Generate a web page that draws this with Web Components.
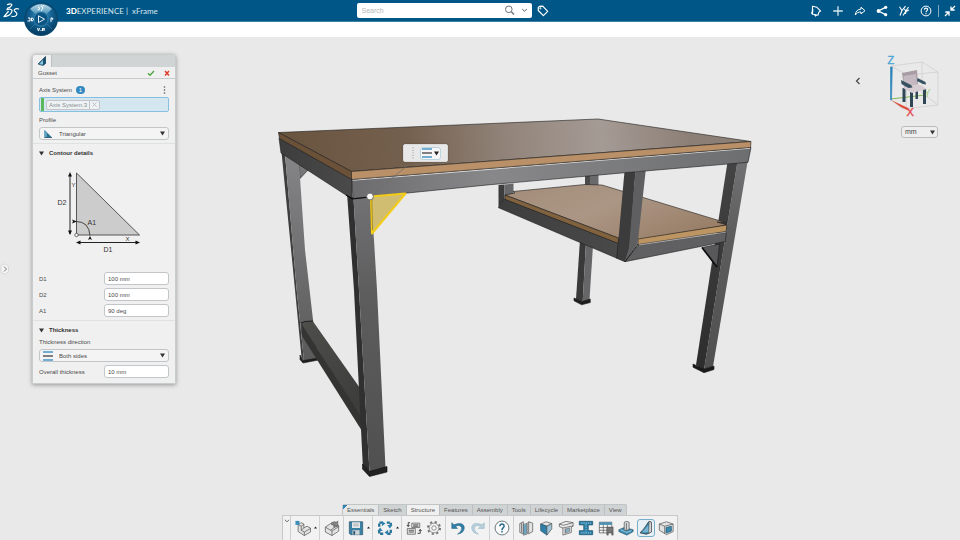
<!DOCTYPE html>
<html lang="en">
<head>
<meta charset="utf-8">
<meta name="viewport" content="width=device-width, initial-scale=1">
<title>3DEXPERIENCE | xFrame</title>
<style>
  html, body { height: 100%; margin: 0; }
  body {
    display: flex; flex-direction: column;
    font: 6px/8px "Liberation Sans", Arial, sans-serif;
    color: #4a4a4a; background: #e9e9e9; overflow: hidden;
    --blue: #005686; --steel: #2f7fa8; --line: #c3c6c8;
  }
</style>
</head>
<body>
<platform-bar></platform-bar>
<work-area>
  <model-scene slot="scene"></model-scene>
  <command-panel slot="panel" heading="Gusset">
    <pick-box label="Axis System" count="1" item="Axis System.3"></pick-box>
    <choice-box label="Profile" value="Triangular">
      <svg slot="icon" width="10" height="10" viewBox="0 0 10 10"><path d="M1.500 1l7.500 7.500H1.500z" fill="#2d6f93"/><path d="M1.500 1l2.500 2.600V8.500H1.500z" fill="#5fa3c4"/><path d="M1.500 8.500H9" stroke="#23516b" stroke-width=".8"/></svg>
    </choice-box>
    <panel-section heading="Contour details">
      <contour-diagram></contour-diagram>
      <field-row label="D1" value="100 mm"></field-row>
      <field-row label="D2" value="100 mm"></field-row>
      <field-row label="A1" value="90 deg"></field-row>
    </panel-section>
    <panel-section heading="Thickness">
      <choice-box label="Thickness direction" value="Both sides">
        <svg slot="icon" width="10" height="10" viewBox="0 0 10 10"><path d="M0 1h10M0 9h10" stroke="#4597c4" stroke-width="1.300"/><path d="M0 5h10" stroke="#333" stroke-width="1.200"/></svg>
      </choice-box>
      <field-row label="Overall thickness" value="10 mm"></field-row>
    </panel-section>
  </command-panel>
  <view-navigator slot="view"></view-navigator>
  <action-bar slot="actions"></action-bar>
</work-area>

<script>
const define = (name, render) => customElements.define(name, class extends HTMLElement {
  connectedCallback() {
    if (this.shadowRoot) return;
    const t = document.createElement('template');
    t.innerHTML = render(this);
    this.attachShadow({ mode: 'open' }).append(t.content.cloneNode(true));
  }
});
const at = (el, n) => el.getAttribute(n) || '';
const BUTTON = `button{all:unset;box-sizing:border-box;cursor:pointer;display:flex;align-items:center;justify-content:center}svg{display:block}`;

/* ---------- Platform bar ---------- */
define('platform-bar', () => `
<style>
  :host{display:grid;grid-template-columns:13fr 192px 15fr;align-items:center;height:22px;flex:none;
    background:var(--blue);color:#fff;border-bottom:1px solid #3f80a5;box-sizing:border-box;position:relative;z-index:2}
  ${BUTTON}
  .brand{display:flex;align-items:center;gap:4px;padding-left:3px}
  .compass{width:34px;height:20px;position:relative}
  .compass svg{position:absolute;left:0;top:0}
  h1{margin:0 0 0 4px;font:400 8px/12px Lato,sans-serif;color:#d7e6ef;white-space:pre}
  h1 b{color:#fff;font-weight:900}
  .find{display:flex;align-items:center;gap:5px}
  form{display:flex;align-items:center;flex:1;height:15px;background:#fff;border-radius:2px;margin:0}
  input{flex:1;min-width:0;border:0;outline:0;background:none;padding:0 0 0 5px;font:7px/9px "Liberation Sans",sans-serif;color:#444}
  input::placeholder{color:#b4b8bb;opacity:1}
  form button{width:15px;height:15px}
  .tools{display:flex;justify-content:flex-end;align-items:center;gap:10px;padding-right:4px}
  .tools .min{border-left:1px solid #7fabc3;padding-left:5px;margin-left:-4px;}
</style>
<div class="brand">
  <svg width="17" height="17" viewBox="0 0 17 17" fill="none" stroke="#fff" stroke-width="1.200" stroke-linecap="round" stroke-linejoin="round"><path d="M4.500 2.600C7 1.500 9.600 1.800 8.600 3.500 7.800 4.900 6.300 5.900 4.300 6.400"/><path d="M3.800 7.700C7.200 6.600 9.800 7.400 8.800 9.800 7.700 12.500 4.300 14.500 1 14.600L5.300 9.500"/><path d="M15.600 7C12.500 6 10 7.700 11.800 9.300 13.600 10.700 14.700 11.800 13.300 13.300 12.200 14.500 10.300 14.700 8.800 14.200"/></svg>
  <button class="compass" aria-label="Compass"><svg width="34" height="37" viewBox="0 0 34 37">
    <defs><radialGradient id="cg" cx=".5" cy=".35" r=".65"><stop offset="0" stop-color="#4b9ac4"/><stop offset=".55" stop-color="#126091"/><stop offset="1" stop-color="#053c62"/></radialGradient>
    <linearGradient id="ct" x2="0" y2="1"><stop offset="0" stop-color="#bcd8e6"/><stop offset="1" stop-color="#4e94bb"/></linearGradient></defs>
    <circle cx="17" cy="18" r="17" fill="#0a4870"/><circle cx="17" cy="18" r="15.500" fill="url(#cg)"/>
    <path d="M6 8a15 15 0 0 1 22 0l-5.500 5a8 8 0 0 0-11 0z" fill="url(#ct)"/>
    <path d="M6 28l5-5a9 9 0 0 0 12 0l5 5M6 8l5 5M28 8l-5 5" stroke="#2f7aa5" fill="none" stroke-width=".7"/>
    <circle cx="17" cy="18" r="7" fill="#0b5585" stroke="#3d88b2" stroke-width=".7"/>
    <path d="M14.500 14.800v6.800l6-3.400z" fill="none" stroke="#fff" stroke-width=".9"/>
    <g stroke="#fff" stroke-width="1" fill="none"><path d="M14 6l2 1.500L14 9M17 5l2 2-2 3M13.500 9l2-1M18.500 5l1.500-.5"/>
    <path d="M4 17h2v3H3.500M7.500 17v3q2 0 2-1.500T7.500 17M27 21v-4h1.500M28 19l1-2"/>
    <path d="M13.500 27l1 3 1-3M17 30v-1M18.500 27v3M18.500 27l1.500 1.500V27v3"/></g></svg></button>
  <h1><b>3D</b>EXPERIENCE |  xFrame</h1>
</div>
<div class="find">
  <form role="search"><input type="text" aria-label="Search" placeholder="Search">
    <button type="button" aria-label="Run search"><svg width="11" height="11" viewBox="0 0 11 11" fill="none" stroke="#68737a"><circle cx="4.800" cy="4.300" r="3.300"/><path d="M7.300 6.800l2.700 2.700" stroke-width="1.400"/></svg></button>
    <button type="button" aria-label="Search options"><svg width="7" height="5" viewBox="0 0 7 5" fill="none" stroke="#55636b"><path d="M1.200 1l2.300 2.300L5.800 1"/></svg></button>
  </form>
  <button aria-label="Tags"><svg width="12" height="12" viewBox="0 0 12 12" fill="none" stroke="#fff"><path d="M1.300 2.500l1.200-1.200 3.200-.1 5 5.200-4.300 4.200L1.300 5.500z" stroke-linejoin="round" stroke-width="1.200"/><circle cx="3.400" cy="3.300" r=".6"/></svg></button>
</div>
<nav class="tools">
  <button aria-label="Notifications"><svg width="12" height="12" viewBox="0 0 12 12" fill="none" stroke="#fff" stroke-width="1.100"><path d="M2.500 1.300l4.300.9L10.500 6 8.800 7.300 8 10.200 2.300 9zM2.300 9l-.7-.9L3 4.500zM4.500 9.700l1 1.200 1.200-.8"/></svg></button>
  <button aria-label="Add"><svg width="12" height="12" viewBox="0 0 12 12"><path d="M6 1.200v9.600M1.200 6h9.600" stroke="#d8e6ee" stroke-width="1.300"/></svg></button>
  <button aria-label="Share"><svg width="12" height="12" viewBox="0 0 12 12" fill="none" stroke="#fff" stroke-linejoin="round"><path d="M7 2.200l4 3.500-4 3.200V7C4.500 6.800 2.500 8 1.300 10 1.500 6.500 3.500 4.300 7 4.100z"/></svg></button>
  <button aria-label="Collaborate"><svg width="12" height="12" viewBox="0 0 12 12"><path d="M10 2.200L2.500 6 10 9.800" fill="none" stroke="#fff" stroke-width="1.400"/><circle cx="9.700" cy="2.300" r="1.600" fill="#fff"/><circle cx="2.500" cy="6" r="1.900" fill="#fff"/><circle cx="9.700" cy="9.700" r="1.600" fill="#fff"/></svg></button>
  <button aria-label="Content"><svg width="12" height="12" viewBox="0 0 12 12" fill="none" stroke="#fff" stroke-width="1.100"><path d="M1.500 1.800L4 5.500 7.500 1.200M4 5.500L2 10.500M10.500 2L5 10.500M6.500 4l1.500 2.500 3-1.500M8 6.500L7.500 9"/></svg></button>
  <button aria-label="Help"><svg width="12" height="12" viewBox="0 0 12 12" fill="none" stroke="#fff"><circle cx="6" cy="6" r="4.900"/><path d="M4.400 4.800C4.400 2.600 7.700 2.700 7.600 4.600 7.500 5.700 6 5.700 6 7.200M6 8.200v1.100" stroke-width="1.200"/></svg></button>
  <button class="min" aria-label="Minimize"><svg width="12" height="12" viewBox="0 0 12 12" fill="none" stroke="#fff" stroke-width="1.300"><path d="M11 1L7.500 4.500M7 1.500V5h3.700M1 11l3.500-3.500M1.300 7H5v3.700"/></svg></button>
</nav>`);

/* ---------- Work area ---------- */
define('work-area', () => `
<style>
  :host{display:flex;flex-direction:column;flex:1;min-height:0}
  .strip{height:15px;background:#fff;flex:none}
  .stage{flex:1;min-height:0;display:grid;grid-template:minmax(0,1fr)/minmax(0,1fr);background:#e9e9e9}
  slot[name=scene],.over{grid-area:1/1}
  ::slotted([slot=scene]){grid-area:1/1}
  .over{display:grid;grid-template-columns:auto 1fr auto;grid-template-rows:1fr auto;z-index:1;position:relative}
  .left{display:flex;align-items:flex-start;gap:23px;padding-top:17px}
  ${BUTTON}
  .handle{align-self:center;width:9px;height:12px;margin-bottom:20px}
  ::slotted([slot=view]){grid-column:3;align-self:start}
  ::slotted([slot=actions]){grid-column:1/-1;justify-self:center}
</style>
<div class="strip"></div>
<div class="stage"><slot name="scene"></slot>
  <div class="over">
    <div class="left"><button class="handle" aria-label="Show tree"><svg width="9" height="12" viewBox="0 0 9 12"><path d="M1 2.500L5 .8 8.500 3.500v5L5 11.200 1 9.500z" fill="#f5f5f5" stroke="#d2d2d2" stroke-width=".8"/><path d="M4 3.500L6.500 6 4 8.500" fill="none" stroke="#777"/></svg></button><slot name="panel"></slot></div>
    <slot name="view"></slot><slot name="actions"></slot>
  </div>
</div>`);

/* ---------- Command panel ---------- */
define('command-panel', el => `
<style>
  :host{display:block;width:144px;box-sizing:border-box;background:#f0f0f0;border:1px solid #c9cccd;border-radius:3px 3px 0 0;box-shadow:0 1px 4px rgba(0,0,0,.35)}
  ${BUTTON}
  .tabs{height:12px;background:#d0d4d5;display:flex;border-radius:2px 2px 0 0}
  .tabs button{width:19px;background:#f0f0f0;border-right:1px solid #bcc0c2;border-radius:2px 0 0 0}
  header{display:flex;align-items:center;height:12px;border-bottom:1px solid #c9cccd;padding:0 3px 0 5px;gap:6px;box-sizing:border-box}
  h2{flex:1;margin:0;font:inherit}
  header button{width:10px;height:10px}
  .body{padding:6px 6px 5px}
</style>
<div class="tabs"><button aria-label="Gusset command"><svg width="10" height="10" viewBox="0 0 10 10"><path d="M8.500.5v7L6 9.500 1 8z" fill="#2d7fa8" stroke="#1f4457" stroke-width=".7"/><path d="M8.500.5L6.300 3v6.500l2.200-2z" fill="#164a66"/><path d="M6 4v4.500L2.500 8z" fill="#8cc4dd"/></svg></button></div>
<header><h2>${at(el, 'heading')}</h2>
  <button aria-label="OK"><svg width="8" height="8" viewBox="0 0 8 8"><path d="M1 4.200l2 2L7 2" fill="none" stroke="#4aa63c" stroke-width="1.300"/></svg></button>
  <button aria-label="Cancel"><svg width="8" height="8" viewBox="0 0 8 8"><path d="M2 2l4 4.500M6 2L2 6.500" fill="none" stroke="#e0402c" stroke-width="1.500"/></svg></button></header>
<div class="body"><slot></slot></div>`);

define('pick-box', el => `
<style>
  :host{display:block}
  ${BUTTON}
  .head{display:flex;align-items:center;gap:4px;height:9px;margin-bottom:3px}
  .badge{background:#3489c0;color:#fff;border-radius:4px;width:9px;text-align:center;line-height:8px}
  .menu{margin-left:auto;width:9px;height:9px}
  .box{display:flex;align-items:center;height:15px;box-sizing:border-box;background:#d4e7f1;border:1px solid #87bfe0;border-radius:2px;gap:2px}
  .box i{width:3px;align-self:stretch;background:#5cb85c;margin-left:1px}
  .chip{display:flex;align-items:stretch;height:10px;box-sizing:border-box;border:1px solid #bfc5c9;border-radius:2px;background:#eef2f4;color:#8a8f93}
  .chip span{padding:0 2px 0 2px;border-right:1px solid #bfc5c9}
  .chip button{width:9px}
</style>
<div class="head"><span id="l">${at(el, 'label')}</span><span class="badge">${at(el, 'count')}</span>
<button class="menu" aria-label="More"><svg width="3" height="8" viewBox="0 0 3 8" fill="#555"><circle cx="1.500" cy="1" r=".8"/><circle cx="1.500" cy="4" r=".8"/><circle cx="1.500" cy="7" r=".8"/></svg></button></div>
<div class="box" role="group" aria-labelledby="l"><i></i><div class="chip"><span>${at(el, 'item')}</span><button aria-label="Remove"><svg width="5" height="5" viewBox="0 0 5 5"><path d="M.5.5l4 4M4.500.5l-4 4" stroke="#b0b4b7" stroke-width=".8"/></svg></button></div></div>`);

define('choice-box', el => `
<style>
  :host{display:block;margin-top:4px}
  label{display:block;height:8px}
  .box{display:grid;align-items:center;margin-top:3px}
  .box>*{grid-area:1/1}
  select{appearance:none;box-sizing:border-box;width:100%;height:13px;margin:0;border:1px solid var(--line);border-radius:3px;background:#f4f4f4;padding:0 12px 0 19px;font:6px/8px "Liberation Sans",sans-serif;color:#4a4a4a}
  ::slotted(svg),svg{pointer-events:none;display:block}
  .ico{padding-left:4px;pointer-events:none}
  .caret{justify-self:end;margin-right:4px}
</style>
<label for="s">${at(el, 'label')}</label>
<div class="box"><select id="s"><option>${at(el, 'value')}</option></select><div class="ico"><slot name="icon"></slot></div>
<svg class="caret" width="5" height="5" viewBox="0 0 5 5"><path d="M0 .5h5L2.500 4.500z" fill="#333"/></svg></div>`);

define('panel-section', el => `
<style>
  :host{display:block;margin:3px -6px 0;padding:5px 6px 0;border-top:1px solid #e0e1e1}
  h3{margin:0 0 4px 0;font:bold 6px/8px "Liberation Sans",sans-serif;color:#333}
  button{all:unset;display:flex;align-items:center;gap:5px;cursor:pointer}
  ::slotted(choice-box){margin-top:0}
</style>
<h3><button aria-expanded="true"><svg width="5" height="5" viewBox="0 0 5 5"><path d="M0 .5h5L2.500 4.500z" fill="#333"/></svg>${at(el, 'heading')}</button></h3>
<slot></slot>`);

define('field-row', el => `
<style>
  :host{display:grid;grid-template-columns:1fr 1fr;align-items:center;margin-top:3px}
  input{box-sizing:border-box;width:100%;height:13px;margin:0;border:1px solid var(--line);border-radius:3px;background:#fff;padding:0 3px;font:6px/8px "Liberation Sans",sans-serif;color:#4a4a4a;outline:0}
</style>
<label for="f">${at(el, 'label')}</label><input id="f" type="text" value="${at(el, 'value')}">`);

define('contour-diagram', () => `
<style>:host{display:block;margin-bottom:13px}svg{display:block;width:100%}text{font:7px "Liberation Sans",sans-serif;fill:#333}</style>
<svg viewBox="39 161 130 98">
  <path d="M76.500 173L139.500 235H76.500z" fill="#ccc" stroke="#555" stroke-width="1"/>
  <path d="M70 174v60M78 242.500h61" stroke="#222"/>
  <path d="M70 172l-2 4.500h4zM70 235l-2-4.500h4zM76 242.500l4.500-2v4zM140 242.500l-4.500-2v4zM77 221.500l-5-2 1 2-1 2zM90 236l-2 4 2-1 2 1z" fill="#111"/>
  <path d="M76 221.500q13 0 14 14" fill="none" stroke="#333" stroke-width=".9"/>
  <circle cx="76.500" cy="235" r="1.700" fill="#fff" stroke="#444" stroke-width=".8"/>
  <text x="57.500" y="205">D2</text><text x="103.500" y="251.500">D1</text><text x="87.500" y="224.500">A1</text>
  <text x="71.500" y="187" style="font-size:6px">Y</text><text x="125.500" y="241" style="font-size:6px">X</text>
</svg>`);

/* ---------- 3D scene ---------- */
define('model-scene', () => `
<style>
  :host{display:block;position:relative;min-height:0}
  .model{display:block;width:100%;height:100%}
  .pop{position:absolute;left:403px;top:107px;display:flex;align-items:center;gap:6px;height:18px;box-sizing:border-box;padding:0 6px 0 8px;background:#e8e8e8;border:1px solid #dadada;border-radius:2px;box-shadow:0 0 2px rgba(0,0,0,.25)}
  .pop button{all:unset;box-sizing:border-box;display:flex;align-items:center;gap:2px;height:13px;padding:0 1px;border:1px solid #b9d3df;border-radius:3px;background:#f6f6f6}
  .pop svg{display:block}
</style>
<svg class="model" viewBox="0 37 960 503" role="img" aria-label="Desk frame model">
  <defs>
    <linearGradient id="top" gradientUnits="userSpaceOnUse" x1="285" y1="165" x2="690" y2="130"><stop offset="0" stop-color="#69543f"/><stop offset=".3" stop-color="#74604e"/><stop offset=".55" stop-color="#92847a"/><stop offset=".78" stop-color="#a59b95"/><stop offset="1" stop-color="#8c7f76"/></linearGradient>
    <linearGradient id="shelf" x2="1" y2=".6"><stop offset="0" stop-color="#a38c79"/><stop offset=".5" stop-color="#ab9685"/><stop offset="1" stop-color="#9a8069"/></linearGradient>
    <linearGradient id="rail"><stop offset="0" stop-color="#6c6c6e"/><stop offset=".35" stop-color="#88888b"/><stop offset="1" stop-color="#6d6e70"/></linearGradient>
    <linearGradient id="side"><stop offset="0" stop-color="#3d3d3d"/><stop offset="1" stop-color="#4a4a4a"/></linearGradient>
    <linearGradient id="leg" x2="0" y2="1"><stop offset="0" stop-color="#727274"/><stop offset=".35" stop-color="#5d5d5e"/><stop offset="1" stop-color="#505050"/></linearGradient>
    <linearGradient id="legb" x2="0" y2="1"><stop offset="0" stop-color="#858587"/><stop offset="1" stop-color="#5a5a5b"/></linearGradient>
    <linearGradient id="dark" x2="0" y2="1"><stop offset="0" stop-color="#444"/><stop offset="1" stop-color="#2d2d2d"/></linearGradient>
    <linearGradient id="brace" x2="1" y2="1"><stop offset="0" stop-color="#4e4e4b"/><stop offset="1" stop-color="#3b3b39"/></linearGradient>
  </defs>
  <g stroke="#1c1c1c" stroke-width=".6" stroke-linejoin="round">
    <!-- rear right leg -->
    <path d="M585 176l6-1v10h-6z" fill="#4a4a4a" stroke="none"/><path d="M590 175l8.500-1v12H590z" fill="#6a6a6c" stroke="none"/>
    <path d="M580 240l6 2-3.300 60-6.700-3z" fill="#3a3a3a" stroke="none"/><path d="M586 242l7 3-3.500 55-6.800 2z" fill="#666668" stroke="none"/>
    <path d="M574 298l8 3.500 8.300-2.500v3.500l-8.600 2.300-7.700-4z" fill="#1d1d1d"/>
    <!-- rear left leg -->
    <path d="M299 163l9.500 6.500-8.500 9z" fill="#77777a"/>
    <path d="M281.500 152l3.500 2 11.700 136L304 361l-2.500-4-6.500-67z" fill="#3e3e3e" stroke="none"/>
    <path d="M285 154l14 9 6 87 12.500 109-13.500 2L296.700 290z" fill="url(#legb)" stroke="none"/>
    <path d="M300 355v4.500l3 3.500 15.500-3v-2l-15.500 2.500z" fill="#1d1d1d"/>
    <path d="M318 359L313 340l-2-19-9 1z" fill="#555" stroke="none" opacity=".4"/>
    <!-- floor brace -->
    <path d="M301 323l11.700-2L362 391v29z" fill="url(#brace)" stroke="none"/>
    <path d="M301 323L362 418v13L302 336z" fill="#343432" stroke="none"/>
    <path d="M301 323l4-1.500 8-.5" fill="none" stroke-width="1"/>
    <!-- front right leg -->
    <path d="M727.500 162h10L704 370l-8-5z" fill="url(#dark)" stroke="none"/>
    <path d="M737.300 162l10.400-1L713 366.500l-9 3z" fill="url(#leg)" stroke="none"/>
    <path d="M693 364l11 5 10-3v3.500l-10 3.200-11-5.500z" fill="#1a1a1a"/>
    <path d="M702 247.500l17.500-3.500L717 267z" fill="#58585a"/><path d="M702 247.500L717 267" stroke="#111" stroke-width="1.800"/>
    <!-- shelf -->
    <path d="M498.500 185l6-.5V199l-6 8.700z" fill="#3c3c3c" stroke="none"/><path d="M504.500 184.500l9-1V195l-9 3z" fill="#68686a" stroke="none"/>
    <path d="M505 195l10-2-2-1.500 72-7 17 .5 125 38-10-1 10 3-89 15-20-2z" fill="url(#shelf)"/>
    <path d="M505 195L618.500 238v6L505 200z" fill="#80623f"/>
    <path d="M638 239l89-14-1 6.500-88 13z" fill="#bd9562"/>
    <path d="M498.500 207.700L504 199l114.500 44.500 6.500 18.200z" fill="url(#side)"/>
    <path d="M625 261.700l13.300-16.700 88-12.500-1 9z" fill="#606062"/>
    <path d="M639 245l87-12.800" stroke="#ccc" stroke-width=".7"/>
    <!-- shelf post -->
    <path d="M624.500 171.500H635.500l-6 78-4.500 12.200-8.300-3.200z" fill="#3c3c3c"  stroke="none"/>
    <path d="M635.300 172l10.400-1.500-8 73L625 261.700l4-14z" fill="#5f5f61" stroke="none"/>
    <path d="M625 261.700L638 244" fill="none" stroke="#111" stroke-width=".9"/><path d="M616.700 258.500l1.800-20" fill="none"/>
    <!-- front left leg -->
    <path d="M347 193l6.500 5 5.500 92 10.500 182-6.700-7L354 290z" fill="#303030" stroke="none"/>
    <path d="M353.500 198l17-2 3.500 44 3 50 8.500 178-16 4.500L359 290z" fill="url(#leg)" stroke="none"/>
    <path d="M362.500 464v5l7 7.500 17.500-4.500v-5.500l-17.500 5z" fill="#222" stroke="#0c0c0c"/>
    <!-- rails -->
    <path d="M279 138L352 179v20L281 153z" fill="url(#side)"/>
    <path d="M352 180L751 147.500l-3 14.800L625 172.700 490 184.700 353 198.500z" fill="url(#rail)"/>
    <path d="M352.500 180.300L750 148.300" stroke="#dcdcdc" stroke-width="1.100"/>
    <path d="M346 195l7 4 17-2" fill="none" stroke="#0c0c0c" stroke-width="1.200"/>
    <!-- table top -->
    <path d="M278.500 132.500L598 119l153 22.500-399.500 30z" fill="url(#top)"/>
    <path d="M278.500 132.500l73 39v8L279.500 138.500z" fill="#6b5138"/>
    <path d="M351.500 171.500L751 141.500l-.5 6-399 32z" fill="#b99067"/>
    <!-- gusset preview -->
    <path d="M371 196.500l34.500-3L372 233.500z" fill="#d0bd72" stroke="#f3cc18" stroke-width="2"/>
    <path d="M371.800 198l.7 32" stroke="#8a7520" stroke-width=".7"/>
    <path d="M370 196.500L408 165" stroke="#6d6d6d" stroke-width=".7"/>
    <circle cx="370" cy="196.500" r="3.400" fill="#fff" stroke="#555" stroke-width=".8"/>
  </g>
</svg>
<div class="pop"><svg width="2" height="12" viewBox="0 0 2 12"><path d="M1 .5v11" stroke="#999" stroke-dasharray="1 1.500"/></svg>
<button aria-label="Thickness direction"><svg width="10" height="10" viewBox="0 0 10 10"><path d="M0 1h10M0 9h10" stroke="#4597c4" stroke-width="1.300"/><path d="M0 5h10" stroke="#333" stroke-width="1.200"/></svg><svg width="5" height="5" viewBox="0 0 5 5"><path d="M0 .5h5L2.500 4.500z" fill="#222"/></svg></button></div>`);

/* ---------- View navigator ---------- */
define('view-navigator', () => `
<style>
  :host{display:grid;grid-template-columns:8px auto;column-gap:22px;padding:16px 20px 0 0}
  ${BUTTON}
  .fold{height:12px;margin-top:22px}
  .col{display:flex;flex-direction:column;align-items:flex-end;gap:6px}
  .u{display:grid;align-items:center;width:37px;margin-right:2px}
  .u>*{grid-area:1/1}
  select{appearance:none;box-sizing:border-box;width:100%;height:12px;margin:0;border:1px solid #b9bcbe;border-radius:3px;background:#eee;padding:0 0 0 3px;font:7px/8px "Liberation Sans",sans-serif;color:#444}
  .u svg{justify-self:end;margin-right:3px;pointer-events:none}
  text{font:11px "Liberation Sans",sans-serif}
</style>
<button class="fold" aria-label="Collapse"><svg width="6" height="8" viewBox="0 0 6 8"><path d="M4.500 1L1.500 4l3 3" fill="none" stroke="#444" stroke-width="1.200"/></svg></button>
<div class="col">
  <svg width="56" height="67" viewBox="884 53 56 67">
    <g fill="none" stroke="#cfcfcf" stroke-width=".8"><path d="M891 66l31-4 16 10v33l-35 4-12-9zM891 66l16 9 31-3M907 75l-1 34M922 62v31l16 12"/></g>
    <path d="M891 99l34-4" stroke="#86b95a" stroke-width="1.100"/>
    <text x="924" y="96.500" fill="#a6cf86" style="font-size:10px">Y</text>
    <g fill="#2f4754"><path d="M902.500 88h3v14h-3zM910 92h3v15h-3zM923 89h3v15h-3zM915.500 88h2.500v11h-2.500z"/></g>
    <path d="M902 73l15-3 1 14-14 3z" fill="#a99ca4"/><path d="M903.500 76l12.500-2 1 11-13 3z" fill="#c4b9c0"/>
    <path d="M903 88l15-4 9 5-15 4z" fill="#d6ccd2"/>
    <path d="M901 80l10 5 1.500 2.500-4 .5-7-4zM917.500 78l8 4 .5 2.500-3-.5-6-3z" fill="#35505f"/>
    <path d="M890.500 67h1.800l-.8 33h-1z" fill="#2c85bb" stroke="#2c85bb" stroke-width=".6"/>
    <path d="M891 100l10 7 8 4-2-3.500z" fill="#e04a35"/>
    <text x="887.500" y="64" fill="#4aa5d3" stroke="#4aa5d3" stroke-width=".4">Z</text><text x="906.500" y="116" fill="#e5484f" stroke="#e5484f" stroke-width=".4">X</text>
  </svg>
  <div class="u"><select aria-label="Units"><option>mm</option></select><svg width="5" height="5" viewBox="0 0 5 5"><path d="M0 .5h5L2.500 4.500z" fill="#333"/></svg></div>
</div>`);

/* ---------- Action bar ---------- */
const G = 'stroke="#555" stroke-width=".8" stroke-linejoin="round"';
const I = {
  block: `<path d="M3.500 5l3.500-2 3 1.500v4.500l3.500-2 4 2v4.500l-7 4-7-4.500z" fill="#e3e3e3" ${G}/><path d="M3.500 5l3.500 2v4.500l3.500 2v4M7 7l3-2M7 11.500l3-2.500M10.500 13.500l7-4" fill="none" ${G}/><path d="M.5 1H5v4.500H.5z" fill="#3a8fbb"/>`,
  edit: `<path d="M1.500 8l6-4 4 1.500v3l5-2.500v6.500l-7.500 5-7.500-4z" fill="#e3e3e3" ${G}/><path d="M1.500 8l6 3.500 1.500 1v5M7.500 11.500l4-3M9 12.500l7.500-5" fill="none" ${G}/><path d="M8 3.500q3-2.500 6-1l1.500-1.500V7h-5L12 5.500q-1.500-1-3 0z" fill="#888" stroke="#555" stroke-width=".7"/>`,
  save: `<path d="M1.500 2h15v14.500H3l-1.500-1.500z" fill="#3b7fa3" stroke="#2b566e" stroke-width=".8"/><path d="M4.500 2.500h9v6.500h-9z" fill="#e5e8ea"/><path d="M6 4.500h6M6 6.500h6" stroke="#999" stroke-width=".8"/><path d="M5 11.500h8v5H5z" fill="#cdd3d6"/><path d="M6 12.500h2v4H6z" fill="#2b566e"/>`,
  update: `<g fill="none" stroke="#2b7398" stroke-width="2.600"><path d="M2.500 7.500V3H7M11 3h4.500v4M15.500 11v4.500H11M7 15.500H2.500V11" stroke-dasharray="3.500 1.200"/></g><path d="M5.500 1v6l4-3zM17.500 5.500h-6l3 4zM12.500 17v-6l-4 3zM.5 12.500h6l-3-4z" fill="#2f83ad"/>`,
  swap: `<path d="M6.500 3.500h9v5h-9zM1.500 9.500h9v6.500h-9z" fill="#e8e8e8" ${G}/><path d="M8 5.500h6M8 7h6M3 11.500h6M3 13.500h6" stroke="#333" stroke-width=".9"/><path d="M4.500 3H2.500v4M1 5.500L2.500 7.500 4 5.500M13 15h3v-4M14.500 12.500L16 10.500l1.500 2" fill="none" stroke="#333" stroke-width="1"/>`,
  gear: `<circle cx="9" cy="9" r="6.800" fill="none" stroke="#777" stroke-width="2.200" stroke-dasharray="2.400 2.940"/><circle cx="9" cy="9" r="5.500" fill="#f3f3f3" stroke="#777" stroke-width=".9"/><circle cx="9" cy="9" r="2.500" fill="#fafafa" stroke="#777" stroke-width=".9"/>`,
  undo: `<path d="M2 3v6.500h6.500L6.300 7.300Q11 4.500 13 8.500q1 4-4.500 7.500 8.500-2 7.500-8.500Q14 1.500 4.500 5.400z" fill="#2f7fa8" stroke="#25617f" stroke-width=".6"/>`,
  redo: `<path d="M16 3v6.500H9.500l2.200-2.200Q7 4.500 5 8.500q-1 4 4.500 7.500Q1 14 2 7.500 4 1.500 13.500 5.400z" fill="#b9d0db" stroke="#8fb2c2" stroke-width=".6"/>`,
  help: `<circle cx="9" cy="9" r="7.800" fill="#fbfbfb" stroke="#5a6a72" stroke-width="1"/><path d="M6.600 7.100C6.500 3.700 11.500 3.900 11.400 7 11.200 9 9 8.800 9 11.200M9 12.200v2" fill="none" stroke="#2a6d92" stroke-width="1.700"/>`,
  member: `<path d="M2 4l4-2V15.500L2 14zM6 5l4-1v12l-4 1zM10 4l2-2 4.500 1.500V13L12 15.500l-2-1z" fill="#e2e4e5" ${G}/><path d="M6.500 5.500l3-1v11l-3 1z" fill="#6ba6c4"/><path d="M12 2v13M4 3.500V14" ${G}/>`,
  panel: `<path d="M3 4.500l6-2.500 6.500 2-5.500 3z" fill="#e8e8e8" ${G}/><path d="M3 4.500L10 7v10l-7-5z" fill="#2f7fa8" stroke="#24566f" stroke-width=".8"/><path d="M10 7l5.500-3v6L10 17z" fill="#9cc5d9" ${G}/>`,
  cut: `<path d="M1.500 4.500L9 1.500l8 1.500v4l-2 1v6l-9.500 3V9l-4-1.500z" fill="#ececec" ${G}/><path d="M1.500 4.500L6 6l11-3M5.500 9L17 6.500M8 9.500v6" fill="none" ${G}/><path d="M8.500 10l4.500-1.200V13l-4.500 1.300z" fill="#8ab3c7" stroke="#555" stroke-width=".6"/>`,
  beam: `<path d="M1.500 1.500h15v4h-5v6.500h5v4.500h-15V12h5V5.500h-5z" fill="#2f7fa8" stroke="#1f5874" stroke-width=".9"/><path d="M3.500 3.500h11M9 5v8M3.500 14.500h11" stroke="#81bbd6" stroke-width="1.200" stroke-dasharray="1.500 1"/>`,
  table: `<path d="M1.500 2.500h14v12h-14z" fill="#f4f4f4" ${G}/><path d="M1.500 2.500h14v3h-14z" fill="#4a8fb3"/><path d="M1.500 8.500h14M1.500 11.500h14M6 5.500v9M10.500 5.500v9" ${G}/><path d="M10 8h7v9h-1.500v-3h-4v3H10z" fill="#777" stroke="#444" stroke-width=".6"/>`,
  plate: `<path d="M1 11l6-2.500 10 2.500v2l-7 4-9-4z" fill="#3b8ab1" stroke="#24566f" stroke-width=".8"/><path d="M7 2.500l3-1 2.500 1v8L9.500 12 7 11z" fill="#d6d9da" ${G}/><path d="M9.500 3.500V12" ${G}/><path d="M3 11l4.500 2 2.500 1 5-2" fill="none" stroke="#a9d3e6"/>`,
  gusset: `<path d="M12.500 1.500L15 2.500v11L9.500 16 2.500 14.500z" fill="#3784ac" stroke="#333" stroke-width=".9"/><path d="M12.500 1.500L15 2.500v11l-3 1.500z" fill="#dfe3e5" ${G}/><path d="M11.500 6v7.500l-7 .5z" fill="#79b3d0"/><path d="M4 12l5-7" stroke="#fff" stroke-width=".7"/>`,
  cap: `<path d="M1.500 4.500l8-2.500L17 4.500v8.500L9.500 16.500l-8-5z" fill="#e2e2e2" ${G}/><path d="M1.500 4.500L7.500 7v8M7.500 7L17 4.500" fill="none" ${G}/><path d="M9 8.500l6-1.500v5.500l-6 2.200z" fill="#3b8ab1" stroke="#24566f" stroke-width=".8"/>`
};
const groups = [['block^'], ['edit'], ['save^'], ['update^'], ['swap', 'gear'], ['undo', 'redo'], ['help'], ['member', 'panel', 'cut', 'beam', 'table', 'plate', 'gusset*', 'cap']];
const tool = k => { const n = k.replace(/[\^*]/, '');
  return `<button class="${k.endsWith('*') ? 'on' : ''}" aria-label="${n}"><svg width="16" height="16" viewBox="0 0 18 18">${I[n]}</svg></button>` +
    (k.endsWith('^') ? `<button class="more" aria-label="${n} options"><svg width="3" height="3" viewBox="0 0 3 3"><path d="M0 2.500h3L1.500.5z" fill="#222"/></svg></button>` : ''); };
define('action-bar', () => `
<style>
  :host{display:block}
  ${BUTTON}
  .tabs{display:flex;width:max-content;margin-left:60px;height:11px;border:1px solid #c2c5c6;border-bottom:0;border-radius:2px 2px 0 0;background:#d0d3d4;box-sizing:border-box}
  .tabs button{padding:0 4px;border-right:1px solid #bcbfc0;color:#555}
  .tabs button:last-child{border-right:0}
  .tabs .lit{background:#f0f0f0}
  .tabs .mark{background:linear-gradient(135deg,#2f83b8 3px,#e6e8e8 3px)}
  .bar{display:flex;height:25px;background:#f2f2f2;border:1px solid #c6c8c9;border-bottom:0;box-sizing:border-box}
  .fold{width:8px;border-right:1px solid #cdcfd0;align-items:flex-start;padding-top:3px}
  .group{display:flex;align-items:center;gap:2px;padding:0 2px 1px 3px;border-right:1px solid #cfd1d2}
  .group:last-child{border-right:0}
  .group button{width:18px;height:18px;border:1px solid transparent;border-radius:3px}
  .group button.on{border-color:#79aecb;background:#e6f0f5}
  .group button.more{width:3px;border:0}
</style>
<div class="tabs" role="tablist">${['Essentials', 'Sketch', 'Structure', 'Features', 'Assembly', 'Tools', 'Lifecycle', 'Marketplace', 'View'].map((t, i) => `<button role="tab" aria-selected="${i === 2}" class="${i === 0 ? 'mark' : i === 2 ? 'lit' : ''}">${t}</button>`).join('')}</div>
<div class="bar"><button class="fold" aria-label="Collapse bar"><svg width="6" height="4" viewBox="0 0 6 4"><path d="M.8.8L3 2.800 5.200.8" fill="none" stroke="#666" stroke-width=".9"/></svg></button>
${groups.map(g => `<div class="group">${g.map(tool).join('')}</div>`).join('')}</div>`);
</script>
</body>
</html>
